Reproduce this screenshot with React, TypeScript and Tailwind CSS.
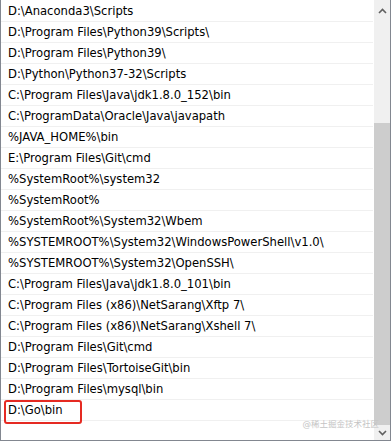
const paths = [
  'D:\\Anaconda3\\Scripts',
  'D:\\Program Files\\Python39\\Scripts\\',
  'D:\\Program Files\\Python39\\',
  'D:\\Python\\Python37-32\\Scripts',
  'C:\\Program Files\\Java\\jdk1.8.0_152\\bin',
  'C:\\ProgramData\\Oracle\\Java\\javapath',
  '%JAVA_HOME%\\bin',
  'E:\\Program Files\\Git\\cmd',
  '%SystemRoot%\\system32',
  '%SystemRoot%',
  '%SystemRoot%\\System32\\Wbem',
  '%SYSTEMROOT%\\System32\\WindowsPowerShell\\v1.0\\',
  '%SYSTEMROOT%\\System32\\OpenSSH\\',
  'C:\\Program Files\\Java\\jdk1.8.0_101\\bin',
  'C:\\Program Files (x86)\\NetSarang\\Xftp 7\\',
  'C:\\Program Files (x86)\\NetSarang\\Xshell 7\\',
  'D:\\Program Files\\Git\\cmd',
  'D:\\Program Files\\TortoiseGit\\bin',
  'D:\\Program Files\\mysql\\bin',
  'D:\\Go\\bin',
];

const Chevron = ({ up }: { up?: boolean }) => (
  <svg width="9" height="6" viewBox="0 0 9 6" className={up ? '' : 'rotate-180'}>
    <path d="M1 5 L4.5 1.5 L8 5" fill="none" stroke="#606060" strokeWidth="1.6" />
  </svg>
);

export default function App() {
  return (
    <div className="h-[442px] w-[392px] bg-white">
      <div className="relative flex h-[441px] w-[391px] border-x border-b border-[#828790] font-['DejaVu_Sans','Noto_Sans_CJK_SC',sans-serif] text-[11.6px] text-black">
        <div className="flex flex-1 flex-col pt-[1px] pr-[1px]">
          {paths.map((p, i) => (
            <div
              key={i}
              className="relative flex h-[21px] shrink-0 items-end border-b border-[#f0f0f0] pb-[3px] pl-[7px] leading-none"
            >
              {i === paths.length - 1 && (
                <div className="absolute left-[3px] top-[0px] h-[24px] w-[78px] rounded-[3px] border-2 border-[#e52a22]" />
              )}
              <span className="whitespace-nowrap">{p}</span>
            </div>
          ))}
        </div>
        <div className="flex w-[16px] flex-col items-center bg-[#f0f0f0]">
          <div className="flex h-[17px] items-end justify-center pb-[3px]">
            <Chevron up />
          </div>
          <div className="mt-[106px] h-[302px] w-full bg-[#cdcdcd]" />
          <div className="flex flex-1 items-center justify-center">
            <Chevron />
          </div>
        </div>
        <span className="absolute bottom-[12px] right-[11px] text-[8.5px] leading-none text-[#c4c4c4]">@稀土掘金技术社区</span>
      </div>
    </div>
  );
}
